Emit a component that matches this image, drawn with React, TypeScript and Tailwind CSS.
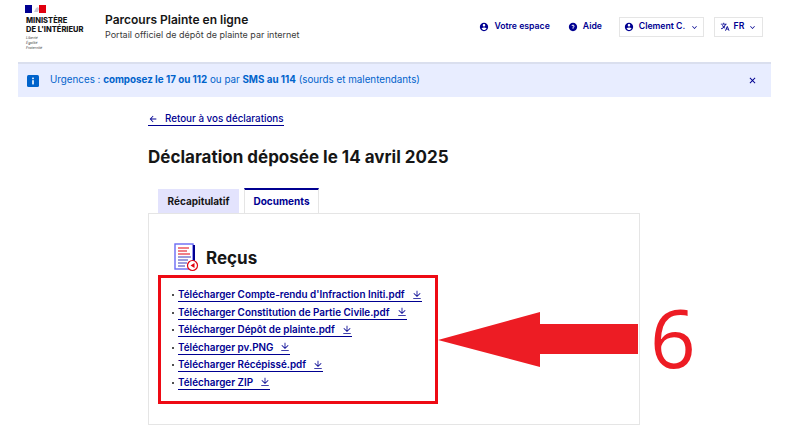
import {
  RiAccountCircleFill,
  RiArrowDownSLine,
  RiArrowLeftLine,
  RiCloseLine,
  RiDownloadLine,
  RiQuestionFill,
  RiTranslate2,
} from 'react-icons/ri';

const documents = [
  "Télécharger Compte-rendu d'Infraction Initi.pdf",
  'Télécharger Constitution de Partie Civile.pdf',
  'Télécharger Dépôt de plainte.pdf',
  'Télécharger pv.PNG',
  'Télécharger Récépissé.pdf',
  'Télécharger ZIP',
];

const Logo = () => (
  <div className="w-[80px] shrink-0 pt-[5px]">
    <svg width="21" height="8" viewBox="0 0 21 8" className="block">
      <rect width="7" height="8" fill="#000091" />
      <rect x="7" width="7" height="8" fill="#fff" />
      <rect x="14" width="7" height="8" fill="#e1000f" />
      <path d="M9 7 L11 3 L13 2 L14 4 L13 7 Z" fill="#c9c9d6" />
    </svg>
    <p className="mt-[3px] ml-px text-[7.5px] leading-[9px] font-extrabold text-[#161616]">
      MINISTÈRE
      <br />
      DE L'INTÉRIEUR
    </p>
    <p className="mt-[2px] ml-px text-[3.6px] leading-[5px] italic text-[#444]">
      Liberté
      <br />
      Égalité
      <br />
      Fraternité
    </p>
  </div>
);

const Header = () => (
  <header className="flex h-[62px] items-start pl-[25px] pr-[28px]">
    <Logo />
    <div className="pt-[12px]">
      <p className="text-[12px] leading-[16px] font-semibold text-[#161616]">Parcours Plainte en ligne</p>
      <p className="text-[9px] leading-[14px] text-[#3a3a3a]">Portail officiel de dépôt de plainte par internet</p>
    </div>
    <nav className="ml-auto flex items-center pt-[17px] text-[8.7px] font-semibold text-[#000091]">
      <a className="flex items-center gap-[5px]">
        <RiAccountCircleFill size={10} />
        Votre espace
      </a>
      <a className="ml-[18px] flex items-center gap-[5px]">
        <RiQuestionFill size={10} />
        Aide
      </a>
      <button className="ml-[17px] flex h-[20px] w-[85px] items-center justify-center gap-[5px] border border-[#e5e5e5] font-semibold">
        <RiAccountCircleFill size={10} />
        Clement C.
        <RiArrowDownSLine size={9} />
      </button>
      <button className="ml-[10px] flex h-[20px] w-[49px] items-center justify-center gap-[4px] border border-[#e5e5e5] font-semibold">
        <RiTranslate2 size={10} />
        FR
        <RiArrowDownSLine size={9} />
      </button>
    </nav>
  </header>
);

const Notice = () => (
  <div className="ml-[18px] mr-[20px] flex h-[35px] items-center border-t-2 border-[#dadfee] bg-[#e8edff] pl-[9px] pr-[13px] text-[9.8px] text-[#0063cb]">
    <svg width="12" height="12" viewBox="0 0 12 12" className="shrink-0">
      <rect width="12" height="12" rx="1.5" fill="#0063cb" />
      <rect x="5.2" y="2.6" width="1.6" height="1.6" fill="#fff" />
      <rect x="5.2" y="5.2" width="1.6" height="4.2" fill="#fff" />
    </svg>
    <p className="ml-[11px]">
      Urgences : <b className="font-bold">composez le 17 ou 112</b> ou par <b className="font-bold">SMS au 114</b> (sourds et malentendants)
    </p>
    <RiCloseLine size={11} className="ml-auto text-[#000091]" />
  </div>
);

const ReceivedIcon = () => (
  <svg width="25" height="29" viewBox="0 0 25 29" className="shrink-0">
    <rect x="1" y="1" width="18" height="25" fill="#fff" stroke="#6a6af4" strokeWidth="1.4" />
    <rect x="19" y="2" width="2" height="21" fill="#000091" />
    <path d="M4 5h11M4 8h9M4 11h12" stroke="#e1000f" strokeWidth="1" />
    <path d="M4 14h13M4 17h10M4 20h9M4 23h7" stroke="#3a3ab8" strokeWidth="1" />
    <circle cx="18.5" cy="22.5" r="5" fill="#fff" stroke="#e1000f" strokeWidth="1.2" />
    <path d="M20.5 20v5l-4-2.5z" fill="#e1000f" />
  </svg>
);

const DocumentList = () => (
  <ul className="mt-[16px] -ml-[2px] flex flex-col gap-[3.6px]">
    {documents.map((label) => (
      <li key={label} className="flex h-[14px] items-center text-[9.9px] font-semibold text-[#000091]">
        <span className="mr-[4px] h-[2px] w-[2px] rounded-full bg-[#161616]" />
        <a className="flex h-[14px] items-center gap-[7px] border-b border-[#000091]">
          {label}
          <RiDownloadLine size={10} />
        </a>
      </li>
    ))}
  </ul>
);

// annotation drawn on top of the screenshot
const Annotation = () => (
  <>
    <div className="absolute left-[158px] top-[275px] h-[129px] w-[280px] border-[3px] border-[#ee0a14]" />
    <svg width="202" height="57" viewBox="0 0 202 57" className="absolute left-[437px] top-[311px]">
      <path d="M1 29 L103 1 V13 H201 V43 H103 V56 Z" fill="#ed1c24" />
    </svg>
    <span className="absolute left-[650px] top-[287px] font-['Open_Sans',sans-serif] text-[80px] leading-[100px] text-[#ed1c24]">6</span>
  </>
);

export default function App() {
  return (
    <div className="relative h-[445px] w-[791px] overflow-hidden bg-white font-['Inter',sans-serif]">
      <Header />
      <Notice />
      <main className="ml-[148px] w-[492px] pt-[16px]">
        <a className="flex h-[13px] w-fit items-center gap-[7px] border-b border-[#000091] text-[9.8px] font-medium text-[#000091]">
          <RiArrowLeftLine size={10} />
          Retour à vos déclarations
        </a>
        <h1 className="mt-[19px] text-[17px] leading-[24px] font-bold text-[#161616]">Déclaration déposée le 14 avril 2025</h1>
        <div className="mt-[19px] flex gap-[5px] pl-[10px] text-[10px] font-bold">
          <div className="mt-[1px] flex h-[24px] w-[81px] items-center justify-center bg-[#e3e3fd] text-[#161616]">Récapitulatif</div>
          <div className="z-10 -mb-px flex h-[25px] w-[75px] items-center justify-center border-x border-t-2 border-x-[#e5e5e5] border-t-[#000091] bg-white text-[#000091]">Documents</div>
        </div>
        <section className="h-[212px] border border-[#e5e5e5] pt-[29px] pl-[25px]">
          <div className="flex items-center gap-[7px]">
            <ReceivedIcon />
            <h2 className="text-[17px] leading-[24px] font-bold text-[#161616]">Reçus</h2>
          </div>
          <DocumentList />
        </section>
      </main>
      <Annotation />
    </div>
  );
}
